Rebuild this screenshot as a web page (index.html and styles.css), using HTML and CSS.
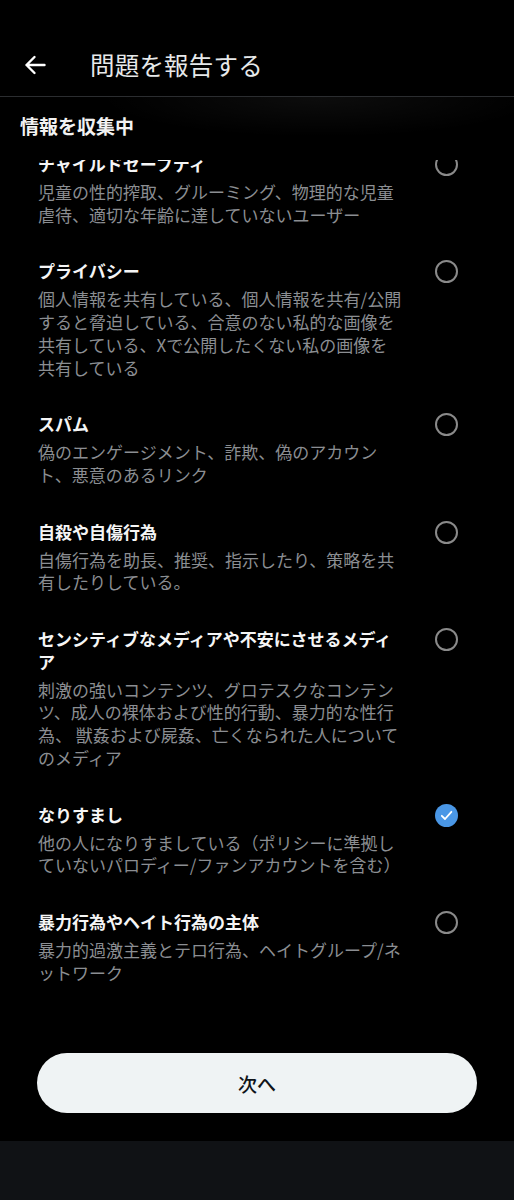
FILE: index.html
```html
<!DOCTYPE html>
<html lang="ja">
<head>
    <meta charset="UTF-8">
    <meta name="viewport" content="width=device-width, initial-scale=1.0">
    <title>問題を報告する</title>
    <link rel="stylesheet" href="styles.css">
</head>
<body>
    <div class="screen">
        <header class="topbar">
            <button class="back-btn" aria-label="戻る">
                <svg width="22" height="20" viewBox="0 0 22 20">
                    <path d="M20.5 10H2.5M10.5 2L2.5 10L10.5 18" fill="none" stroke="#ffffff" stroke-width="2.4" stroke-linecap="round" stroke-linejoin="round"/>
                </svg>
            </button>
            <h1 class="topbar-title">問題を報告する</h1>
        </header>

        <div class="section-head">情報を収集中</div>

        <div class="list-viewport">
            <ul class="option-list">
                <li class="option">
                    <div class="option-text">
                        <div class="option-title">チャイルドセーフティ</div>
                        <div class="option-desc">児童の性的搾取、グルーミング、物理的な児童虐待、適切な年齢に達していないユーザー</div>
                    </div>
                    <span class="radio"></span>
                </li>
                <li class="option">
                    <div class="option-text">
                        <div class="option-title">プライバシー</div>
                        <div class="option-desc">個人情報を共有している、個人情報を共有/公開すると脅迫している、合意のない私的な画像を共有している、Xで公開したくない私の画像を共有している</div>
                    </div>
                    <span class="radio"></span>
                </li>
                <li class="option">
                    <div class="option-text">
                        <div class="option-title">スパム</div>
                        <div class="option-desc">偽のエンゲージメント、詐欺、偽のアカウント、悪意のあるリンク</div>
                    </div>
                    <span class="radio"></span>
                </li>
                <li class="option">
                    <div class="option-text">
                        <div class="option-title">自殺や自傷行為</div>
                        <div class="option-desc">自傷行為を助長、推奨、指示したり、策略を共有したりしている。</div>
                    </div>
                    <span class="radio"></span>
                </li>
                <li class="option">
                    <div class="option-text">
                        <div class="option-title">センシティブなメディアや不安にさせるメディア</div>
                        <div class="option-desc">刺激の強いコンテンツ、グロテスクなコンテンツ、成人の裸体および性的行動、暴力的な性行為、 獣姦および屍姦、亡くなられた人についてのメディア</div>
                    </div>
                    <span class="radio"></span>
                </li>
                <li class="option">
                    <div class="option-text">
                        <div class="option-title">なりすまし</div>
                        <div class="option-desc">他の人になりすましている（ポリシーに準拠していないパロディー/ファンアカウントを含む）</div>
                    </div>
                    <span class="radio checked">
                        <svg width="23" height="23" viewBox="0 0 23 23">
                            <path d="M6.8 11.8L10 15L16.4 7.8" fill="none" stroke="#ffffff" stroke-width="1.8" stroke-linecap="round" stroke-linejoin="round"/>
                        </svg>
                    </span>
                </li>
                <li class="option">
                    <div class="option-text">
                        <div class="option-title">暴力行為やヘイト行為の主体</div>
                        <div class="option-desc">暴力的過激主義とテロ行為、ヘイトグループ/ネットワーク</div>
                    </div>
                    <span class="radio"></span>
                </li>
            </ul>
        </div>

        <footer class="footer">
            <button class="next-btn">次へ</button>
        </footer>

        <div class="navbar"></div>
    </div>
</body>
</html>
```

FILE: styles.css
```css
body {
    margin: 0;
    background-color: #000;
    color: #e7e9ea;
    font-family: "Noto Sans CJK JP", "Noto Sans", sans-serif;
}
.screen {
    display: flex;
    flex-direction: column;
    height: 1200px;
}
.topbar {
    height: 97px;
    box-sizing: border-box;
    display: flex;
    align-items: center;
    padding: 34px 0 0 24px; /* space left for the status bar */
    border-bottom: 1px solid #2b2d30;
    flex-shrink: 0;
}
.back-btn {
    background: none;
    border: none;
    padding: 0;
    width: 22px;
    height: 20px;
    display: flex;
}
.topbar-title {
    margin: 0 0 0 44px;
    font-size: 24.5px;
    font-weight: 400;
    color: #e7e9ea;
    line-height: 1;
    letter-spacing: 0.2px;
}
.section-head {
    height: 63px;
    flex-shrink: 0;
    box-sizing: border-box;
    padding: 17px 0 0 20px;
    font-size: 19px;
    font-weight: 700;
    line-height: 24px;
    color: #f2f2f2;
    background: radial-gradient(ellipse 220px 40px at 320px 0, rgba(255, 255, 255, 0.05), rgba(255, 255, 255, 0) 100%);
}
.list-viewport {
    flex: 1;
    overflow: hidden;
}
.option-list {
    list-style: none;
    margin: -24px 0 0 0; /* list is scrolled a little, first title is cut */
    padding: 0;
}
.option {
    display: flex;
    align-items: flex-start;
    padding: 17px 56px 17px 38px;
}
.option-text {
    width: 366px;
}
.option-title {
    font-size: 17px;
    font-weight: 700;
    line-height: 22.7px;
    color: #f5f5f5;
}
.option-desc {
    margin-top: 5.3px;
    font-size: 17px;
    line-height: 22.7px;
    color: #8b8e92;
}
.radio {
    margin-left: auto;
    width: 23px;
    height: 23px;
    box-sizing: border-box;
    border: 2.2px solid #8a8a8a;
    border-radius: 50%;
    flex-shrink: 0;
}
.radio.checked {
    border: none;
    background-color: #4a97e6;
    display: flex;
}
.footer {
    flex-shrink: 0;
    padding: 20px 37px 28px 37px;
}
.next-btn {
    display: block;
    width: 100%;
    height: 60px;
    border: none;
    border-radius: 30px;
    background-color: #eff3f4;
    color: #0f1419;
    font-family: "Noto Sans CJK JP", "Noto Sans", sans-serif;
    font-size: 19px;
    font-weight: 500;
    padding: 0;
}
.navbar {
    height: 59px;
    flex-shrink: 0;
    background-color: #101215;
}
```
